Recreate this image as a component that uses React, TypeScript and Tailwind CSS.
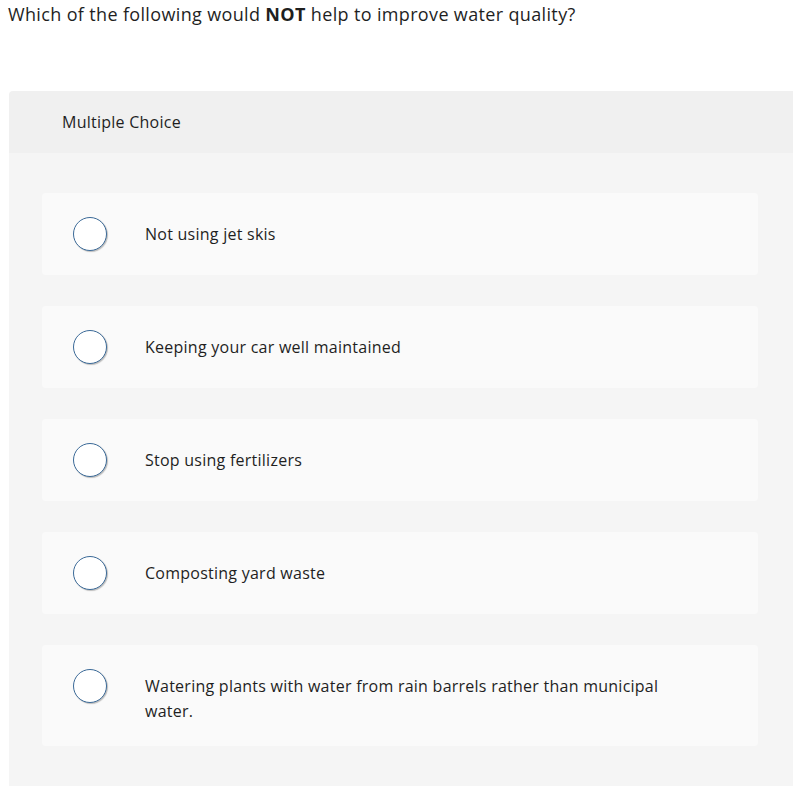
import React from 'react';

const choices = [
  'Not using jet skis',
  'Keeping your car well maintained',
  'Stop using fertilizers',
  'Composting yard waste',
  'Watering plants with water from rain barrels rather than municipal water.',
];

export default function App() {
  return (
    <div className="w-[793px] h-[786px] overflow-hidden bg-white text-[#1f1f1f] font-['Open_Sans','Lato',sans-serif]">
      <h1 className="px-2 pt-[1px] text-[18px] leading-[27px] font-normal tracking-[0.35px]">
        Which of the following would <strong className="font-bold">NOT</strong> help to improve water quality?
      </h1>

      <div className="mt-[63px] ml-[9px] w-[800px] rounded-t-[4px] overflow-hidden">
        <div className="h-[62px] bg-[#f0f0f0] pl-[53px] flex items-center text-[16px] tracking-[0.25px]">
          Multiple Choice
        </div>

        <div className="bg-[#f5f5f5] pt-[40px] pl-[33px] pb-[60px] flex flex-col gap-[31px]">
          {choices.map((c) => (
            <label key={c} className="w-[716px] flex items-start bg-[#fafafa] rounded-[4px]">
              <div className="pl-[31px] py-[24px] shrink-0">
                <span className="block w-[34px] h-[34px] rounded-full bg-white border-[1.5px] border-[#3b6a98] shadow-[1px_1px_1px_rgba(0,0,0,0.25)]" />
              </div>
              <div className="flex-1 pl-[38px] pr-[92px] pt-[29px] pb-[22px] text-[16px] leading-[25px] tracking-[0.25px]">
                {c}
              </div>
            </label>
          ))}
        </div>
      </div>
    </div>
  );
}
